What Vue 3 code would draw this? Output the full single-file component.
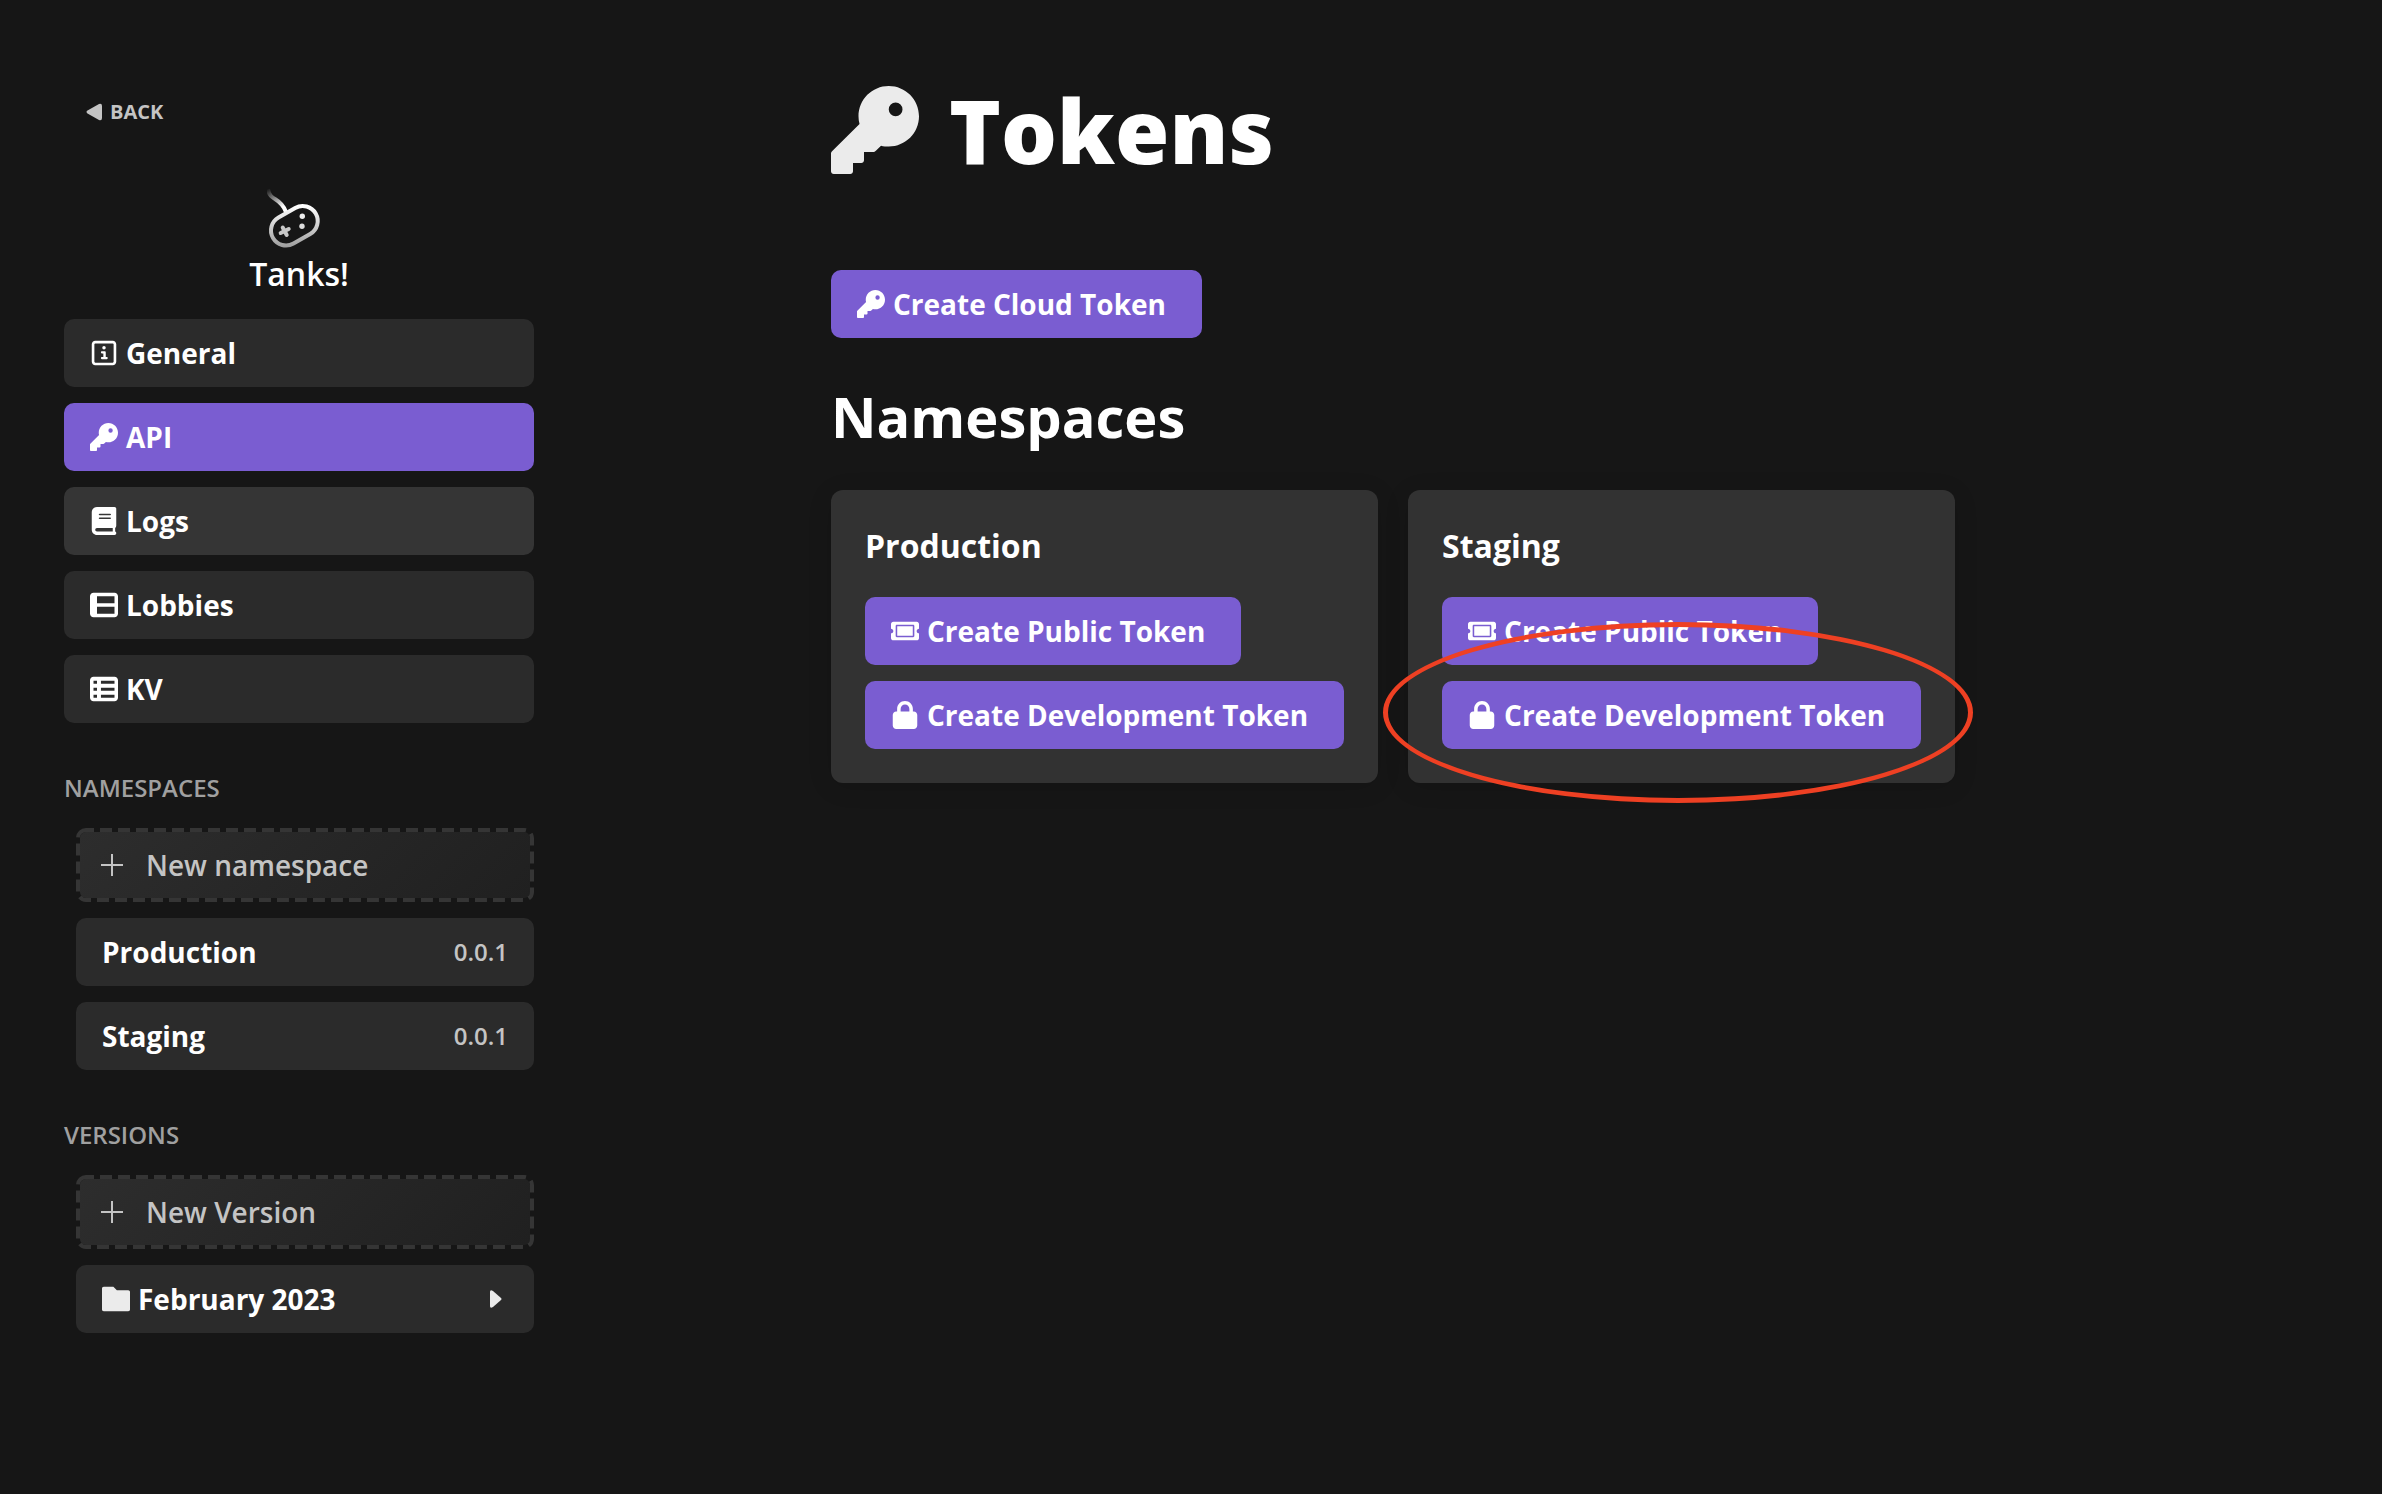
<script setup>
const icons = {
  key: { box: '0 0 512 512', d: 'M336 352c97.200 0 176-78.800 176-176S433.200 0 336 0 160 78.800 160 176c0 15 2 31 6 45L6 380c-4 4-6 8-6 13v103c0 9 7 16 16 16h96c9 0 16-7 16-16v-48h48c9 0 16-7 16-16v-48h52c8 0 12-2 17-7l30-30c14 4 30 5 45 5zM376 96a40 40 0 1 1 0 80 40 40 0 1 1 0-80z' },
  info: { box: '-32 0 512 512', d: 'M384 32H64C29 32 0 61 0 96v320c0 35 29 64 64 64h320c35 0 64-29 64-64V96c0-35-29-64-64-64zm16 384c0 9-7 16-16 16H64c-9 0-16-7-16-16V96c0-9 7-16 16-16h320c9 0 16 7 16 16zM224 192a32 32 0 1 0 0-64 32 32 0 1 0 0 64zM184 224h56c10 0 16 7 16 16v88h20c10 0 16 8 16 20s-6 20-16 20h-92c-10 0-16-8-16-20s6-20 16-20h28v-64h-28c-10 0-16-8-16-20s6-20 16-20z' },
  book: { box: '-32 0 512 512', d: 'M448 336V32c0-18-14-32-32-32H96C43 0 0 43 0 96v320c0 53 43 96 96 96h320c18 0 32-14 32-32 0-14-8-26-20-30v-68c12-8 20-25 20-46zM144 124h192c9 0 16 8 16 13s-7 13-16 13H144c-9 0-16-8-16-13s7-13 16-13zm0 70h192c9 0 16 8 16 13s-7 13-16 13H144c-9 0-16-8-16-13s7-13 16-13zM384 448H96c-18 0-32-14-32-32s14-32 32-32h288z' },
  lobbies: { box: '0 0 512 512', d: 'M448 32H64C29 32 0 61 0 96v320c0 35 29 64 64 64h384c35 0 64-29 64-64V96c0-35-29-64-64-64zM448 416H128V288h320zM448 224H128V96h320z' },
  kv: { box: '0 0 512 512', d: 'M448 32H64C29 32 0 61 0 96v320c0 35 29 64 64 64h384c35 0 64-29 64-64V96c0-35-29-64-64-64zM128 416H64v-56h64zm0-128H64v-56h64zm0-128H64v-56h64zM448 416H200v-56h248zm0-128H200v-56h248zm0-128H200v-56h248z' },
  ticket: { box: '0 0 576 512', d: 'M128 160h320v192H128zM576 208V112c0-27-21-48-48-48H48C21 64 0 85 0 112v96c27 0 48 21 48 48s-21 48-48 48v96c0 27 21 48 48 48h480c27 0 48-21 48-48v-96c-27 0-48-21-48-48s21-48 48-48zM480 360c0 13-11 24-24 24H120c-13 0-24-11-24-24V152c0-13 11-24 24-24h336c13 0 24 11 24 24z' },
  lock: { box: '-32 0 512 512', d: 'M80 192v-48C80 64 145 0 224 0s144 64 144 144v48h16c35 0 64 29 64 64v192c0 35-29 64-64 64H64c-35 0-64-29-64-64V256c0-35 29-64 64-64zm64 0h160v-48c0-44-36-80-80-80s-80 36-80 80z' },
  plus: { box: '0 0 24 24', d: 'M11 1h2v10h10v2H13v10h-2V13H1v-2h10z' },
  folder: { box: '0 0 512 512', d: 'M512 128v320c0 18-14 32-32 32H32c-18 0-32-14-32-32V64c0-18 14-32 32-32h176l64 64h208c18 0 32 14 32 32z' }
}
const nav = [
  { label: 'General', icon: 'info' },
  { label: 'API', icon: 'key', state: 'active' },
  { label: 'Logs', icon: 'book', state: 'hovered' },
  { label: 'Lobbies', icon: 'lobbies' },
  { label: 'KV', icon: 'kv' }
]
const namespaces = [
  { name: 'Production', version: '0.0.1' },
  { name: 'Staging', version: '0.0.1', marked: true }
]
</script>

<template>
  <div class="page">
    <aside class="sidebar">
      <a class="back" href="#">
        <svg class="back-arrow" viewBox="0 0 16 18"><path d="M13 1 1.500 7.600a1.500 1.500 0 0 0 0 2.800L13 17q3 1 3-2V3q0-3-3-2z" /></svg>
        BACK
      </a>
      <div class="game">
        <svg class="gamepad" viewBox="0 0 64 64" fill="none">
          <defs>
            <linearGradient id="pad" gradientUnits="userSpaceOnUse" x1="27" y1="18" x2="27" y2="61">
              <stop offset="0" stop-color="#fff" /><stop offset="1" stop-color="#999" />
            </linearGradient>
            <linearGradient id="cord" gradientUnits="userSpaceOnUse" x1="2" y1="0" x2="14" y2="20">
              <stop offset="0" stop-color="#fff" stop-opacity="0" /><stop offset="1" stop-color="#fff" />
            </linearGradient>
          </defs>
          <path d="M1 1C3 14 13 8 19 24" stroke="url(#cord)" stroke-width="4" />
          <path d="M11.500 29.500 28.200 20A15 15 0 0 1 43.200 46L26.500 55.500A15 15 0 0 1 11.500 29.500z" stroke="url(#pad)" stroke-width="4" />
          <path d="m15.700 39.500 4 7.500M13.700 45l8-4" stroke="#c8c8c8" stroke-width="4" stroke-linecap="round" />
          <circle cx="35.300" cy="28.300" r="2.700" fill="#eee" /><circle cx="35" cy="38.300" r="2.700" fill="#ddd" />
        </svg>
        <span>Tanks!</span>
      </div>
      <nav class="stack">
        <a v-for="n in nav" :key="n.label" href="#" class="item" :class="n.state">
          <svg class="icon" :viewBox="icons[n.icon].box"><path fill-rule="evenodd" :d="icons[n.icon].d" /></svg>
          {{ n.label }}
        </a>
      </nav>
      <h2 class="group">NAMESPACES</h2>
      <div class="stack nested">
        <button class="create">
          <svg class="dashes"><rect class="dash-line" x="2" y="2" rx="8" /></svg>
          <svg class="plus" :viewBox="icons.plus.box"><path :d="icons.plus.d" /></svg>New namespace
        </button>
        <a v-for="n in namespaces" :key="n.name" href="#" class="item">
          {{ n.name }}<span class="version">{{ n.version }}</span>
        </a>
      </div>
      <h2 class="group">VERSIONS</h2>
      <div class="stack nested">
        <button class="create">
          <svg class="dashes"><rect class="dash-line" x="2" y="2" rx="8" /></svg>
          <svg class="plus" :viewBox="icons.plus.box"><path :d="icons.plus.d" /></svg>New Version
        </button>
        <a href="#" class="item">
          <svg class="icon soft" :viewBox="icons.folder.box"><path :d="icons.folder.d" /></svg>
          February 2023
          <svg class="caret" viewBox="0 0 12 18"><path d="M0 2q0-3 3-1l8 7q1 1 0 2l-8 7q-3 2-3-1z" /></svg>
        </a>
      </div>
    </aside>

    <main class="main">
      <h1 class="title">
        <svg class="title-icon" :viewBox="icons.key.box"><path fill-rule="evenodd" :d="icons.key.d" /></svg>
        Tokens
      </h1>
      <button class="btn">
        <svg class="icon" :viewBox="icons.key.box"><path fill-rule="evenodd" :d="icons.key.d" /></svg>Create Cloud Token
      </button>
      <h2 class="subtitle">Namespaces</h2>
      <div class="cards">
        <section v-for="n in namespaces" :key="n.name" class="card">
          <h3>{{ n.name }}</h3>
          <button class="btn">
            <svg class="icon" :viewBox="icons.ticket.box"><path fill-rule="evenodd" :d="icons.ticket.d" /></svg>Create Public Token
          </button>
          <button class="btn">
            <svg class="icon" :viewBox="icons.lock.box"><path fill-rule="evenodd" :d="icons.lock.d" /></svg>Create Development Token
          </button>
          <span v-if="n.marked" class="ring"></span>
        </section>
      </div>
    </main>
  </div>
</template>

<style>
body {
  background: #161616;
}
</style>

<style scoped>
.page {
  display: flex;
  min-height: 100vh;
  box-sizing: border-box;
  color: #fff;
  font-family: "Open Sans", "Noto Sans", sans-serif;
  font-size: 28px;
  line-height: 40px;
}
svg {
  fill: currentColor;
  flex: none;
}
a {
  color: inherit;
  text-decoration: none;
}
button {
  font: inherit;
  color: inherit;
  cursor: pointer;
}
h1, h2, h3 {
  margin: 0;
}
.sidebar {
  flex: none;
  display: flex;
  flex-direction: column;
  width: 470px;
  padding: 92px 64px 64px;
}
.back {
  display: flex;
  align-items: center;
  align-self: flex-start;
  gap: 8px;
  margin-left: 22px;
  color: #c4c4c4;
  font-size: 20px;
  font-weight: 700;
}
.back-arrow {
  width: 16px;
  height: 18px;
}
.game {
  display: flex;
  flex-direction: column;
  align-items: center;
  margin: 56px 0 23px;
  font-size: 32px;
  font-weight: 600;
  line-height: 44px;
}
.gamepad {
  width: 64px;
  height: 64px;
  fill: none;
}
.stack {
  display: flex;
  flex-direction: column;
  gap: 16px;
}
.nested {
  margin-left: 12px;
}
.item {
  display: flex;
  align-items: center;
  gap: 8px;
  padding: 14px 26px;
  border-radius: 10px;
  background: #2b2b2b;
  font-weight: 700;
}
.item.active {
  background: #7a5dd1;
}
.item.hovered {
  background: #353535;
}
.icon {
  width: 28px;
  height: 28px;
}
.icon.soft {
  color: #ebebeb;
}
.version {
  margin-left: auto;
  color: #c4c4c4;
  font-size: 24px;
  font-weight: 600;
}
.caret {
  width: 12px;
  height: 18px;
  margin: 0 6px 0 auto;
  color: #ebebeb;
}
.group {
  margin: 45px 0 20px;
  color: #a0a0a0;
  font-size: 24px;
  font-weight: 600;
}
.create {
  position: relative;
  display: flex;
  align-items: center;
  gap: 22px;
  padding: 13px 20px;
  border: 4px solid transparent;
  border-radius: 10px;
  background: linear-gradient(135deg, #2d2d2d, #202020) padding-box;
  color: #c4c4c4;
  font-weight: 600;
}
.dashes {
  position: absolute;
  top: -4px;
  left: -4px;
  width: calc(100% + 8px);
  height: calc(100% + 8px);
}
.dash-line {
  width: calc(100% - 4px);
  height: calc(100% - 4px);
  fill: none;
  stroke: #353535;
  stroke-width: 4px;
  stroke-dasharray: 12 6;
  stroke-dashoffset: 4px;
}
.plus {
  width: 24px;
  height: 24px;
}
.main {
  flex: 1;
  max-width: 1318px;
  margin: 0 auto;
  padding: 82px 0 64px;
}
.title {
  display: flex;
  align-items: center;
  gap: 30px;
  margin-bottom: 92px;
  font-size: 88px;
  font-weight: 800;
  line-height: 96px;
}
.title-icon {
  width: 88px;
  height: 88px;
  color: #ebebeb;
}
.btn {
  display: flex;
  align-items: center;
  gap: 8px;
  padding: 14px 36px 14px 26px;
  border: 0;
  border-radius: 10px;
  background: #7a5dd1;
  font-weight: 700;
}
.subtitle {
  margin: 38px 0 34px;
  font-size: 56px;
  font-weight: 700;
  line-height: 80px;
}
.cards {
  display: flex;
  flex-wrap: wrap;
  gap: 30px;
}
.card {
  position: relative;
  display: flex;
  flex-direction: column;
  align-items: flex-start;
  gap: 16px;
  padding: 34px;
  border-radius: 12px;
  background: #323232;
  box-shadow: 0 4px 24px rgba(0, 0, 0, 0.12);
}
.card h3 {
  margin-bottom: 13px;
  font-size: 32px;
  font-weight: 700;
  line-height: 44px;
}
.ring {
  position: absolute;
  inset: 132px -18px -20px -25px;
  border: 5px solid #ee4023;
  border-radius: 50%;
  pointer-events: none;
}
</style>
